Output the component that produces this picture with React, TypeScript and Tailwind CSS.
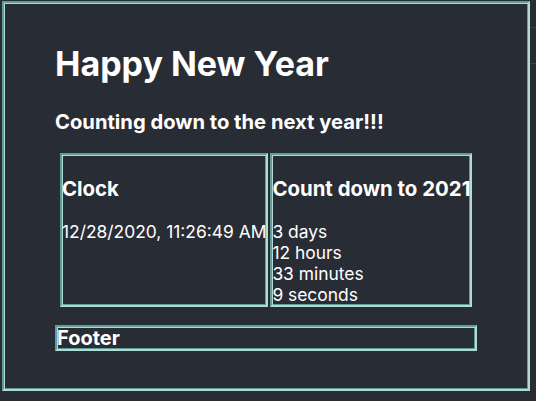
const box =
  "border-2 border-t-[#5f9e97] border-l-[#5f9e97] border-b-[#b3dad4] border-r-[#b3dad4] shadow-[inset_1px_1px_0_#b3dad4,inset_-1px_-1px_0_#5f9e97]";

export default function App() {
  return (
    <div className="w-[536px] h-[401px] bg-[#282c34] overflow-hidden flex font-['Inter',sans-serif] text-white">
      <div className={`ml-[2px] mt-[1px] w-[528px] h-[390px] shrink-0 ${box}`}>
        <div className="ml-[51px] w-[422px]">
          <h1 className="mt-[39px] text-[34px] leading-[44px] font-bold">Happy New Year</h1>
          <h2 className="mt-[24px] text-[20.2px] leading-[24px] font-bold">Counting down to the next year!!!</h2>
          <div className="mt-[19px] ml-[5px] flex gap-[2px]">
            <div className={box}>
              <h3 className="mt-[22px] mb-[20px] text-[20.4px] leading-[24px] font-bold">Clock</h3>
              <p className="text-[17.4px] leading-[21px]">12/28/2020, 11:26:49 AM</p>
            </div>
            <div className={box}>
              <h3 className="mt-[22px] mb-[20px] text-[20.4px] leading-[24px] font-bold">Count down to 2021</h3>
              <div className="text-[17.4px] leading-[21px]">
                <div>3 days</div>
                <div>12 hours</div>
                <div>33 minutes</div>
                <div>9 seconds</div>
              </div>
            </div>
          </div>
          <div className={`mt-[18px] pt-[1px] ${box}`}>
            <p className="text-[20px] leading-[21px] font-bold">Footer</p>
          </div>
        </div>
      </div>
      <div className="flex-1 flex flex-col">
        <div className="mt-[27px] h-px bg-[#3b4049]" />
        <div className="mt-[35px] h-px bg-[#3b4049]" />
      </div>
    </div>
  );
}
